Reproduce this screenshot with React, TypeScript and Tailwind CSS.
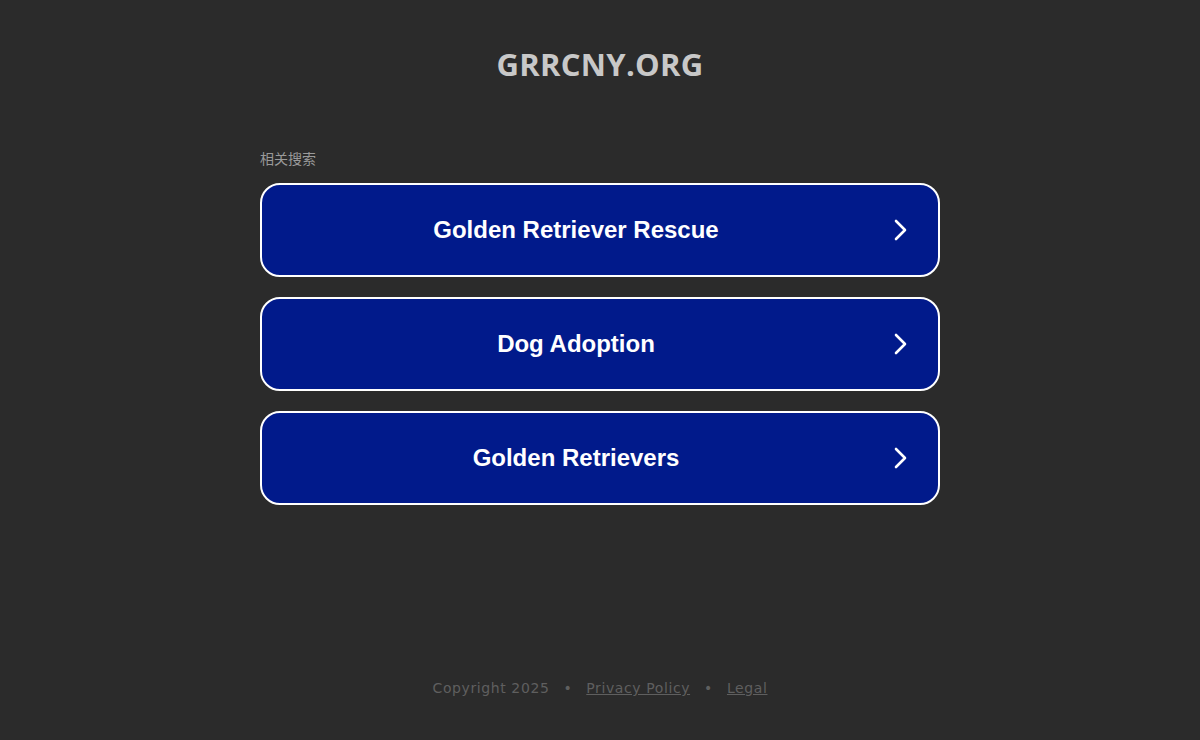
import React from "react";

const items = ["Golden Retriever Rescue", "Dog Adoption", "Golden Retrievers"];

export default function App() {
  return (
    <div className="min-h-[740px] w-full bg-[#2b2b2b] flex flex-col items-center">
      <h1 className="mt-[44px] text-[31px] leading-[40px] font-bold text-[#c8c8c8] tracking-[0.3px]" style={{ fontFamily: '"Open Sans", sans-serif' }}>
        GRRCNY.ORG
      </h1>
      <div className="mt-[66px] w-[680px]">
        <div className="text-[14px] leading-[18px] text-[#9a9a9a] mb-[15px]" style={{ fontFamily: '"Liberation Sans", "Noto Sans CJK SC", sans-serif' }}>
          相关搜索
        </div>
        <div className="flex flex-col gap-[20px]">
          {items.map((t) => (
            <a
              key={t}
              href="#"
              className="flex items-center h-[94px] rounded-[20px] border-2 border-white bg-[#011a8b] text-white"
            >
              <span className="flex-1 text-center pl-[48px] text-[24px] font-bold" style={{ fontFamily: '"Liberation Sans", Arial, sans-serif' }}>
                {t}
              </span>
              <span className="w-[96px] flex justify-center pl-[22px]">
                <svg width="16" height="24" viewBox="0 0 16 24" fill="none">
                  <path d="M3 3 L12 12 L3 21" stroke="white" strokeWidth="2.6" strokeLinecap="round" strokeLinejoin="round" />
                </svg>
              </span>
            </a>
          ))}
        </div>
      </div>
      <div className="mt-[173px] flex items-center gap-[14px] text-[14px] text-[#5f5f5f] tracking-[0.6px]" style={{ fontFamily: '"DejaVu Sans", sans-serif' }}>
        <span>Copyright 2025</span>
        <span>•</span>
        <a href="#" className="underline">Privacy Policy</a>
        <span>•</span>
        <a href="#" className="underline">Legal</a>
      </div>
    </div>
  );
}
